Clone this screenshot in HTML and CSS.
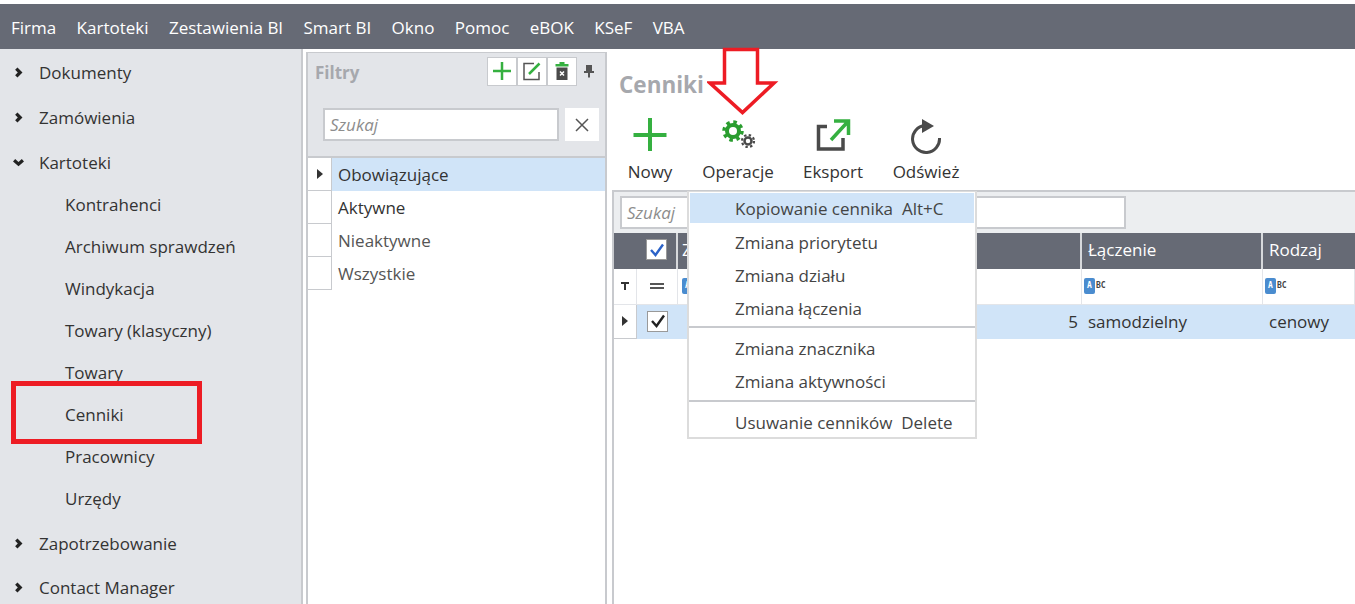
FILE: index.html
```html
<!DOCTYPE html>
<html lang="pl">
<head>
<meta charset="utf-8">
<title>Cenniki</title>
<link rel="stylesheet" href="styles.css">
</head>
<body>
<div class="app">
  <nav class="menubar">
    <span>Firma</span><span>Kartoteki</span><span>Zestawienia BI</span><span>Smart BI</span><span>Okno</span><span>Pomoc</span><span>eBOK</span><span>KSeF</span><span>VBA</span>
  </nav>
  <div class="workspace">
    <aside class="sidebar">
      <div class="group"><svg class="chev" viewBox="0 0 10 10"><path d="M3 1.500 6.500 5 3 8.500"/></svg>Dokumenty</div>
      <div class="group"><svg class="chev" viewBox="0 0 10 10"><path d="M3 1.500 6.500 5 3 8.500"/></svg>Zamówienia</div>
      <div class="group"><svg class="chev" viewBox="0 0 10 10"><path d="M1 3 5 6.500 9 3"/></svg>Kartoteki</div>
      <div class="child">Kontrahenci</div>
      <div class="child">Archiwum sprawdzeń</div>
      <div class="child">Windykacja</div>
      <div class="child">Towary (klasyczny)</div>
      <div class="child">Towary</div>
      <div class="child">Cenniki</div>
      <div class="child">Pracownicy</div>
      <div class="child">Urzędy</div>
      <div class="group"><svg class="chev" viewBox="0 0 10 10"><path d="M3 1.500 6.500 5 3 8.500"/></svg>Zapotrzebowanie</div>
      <div class="group"><svg class="chev" viewBox="0 0 10 10"><path d="M3 1.500 6.500 5 3 8.500"/></svg>Contact Manager</div>
    </aside>
    <section class="filters">
      <header class="filters-head">
        <span class="filters-title">Filtry</span>
        <div class="tool-group">
          <button class="tool"><svg viewBox="0 0 22 22" width="22" height="22"><path d="M11 2V20M2 11H20" class="g2"/></svg></button>
          <button class="tool"><svg viewBox="0 0 22 22" width="22" height="22"><path d="M18 12V19.500H3V3.500H13" class="d15"/><path d="M8 14 18.500 3.500" class="g25"/></svg></button>
          <button class="tool"><svg viewBox="0 0 22 22" width="22" height="22"><path d="M4.500 4H17.500V6.500H4.500ZM8.500 4V2H13.500V4" class="gfill"/><path d="M5.500 7.500H16.500V20H5.500Z" class="dfill"/><path d="M9 11.500 13 15.500M13 11.500 9 15.500" class="wline"/></svg></button>
        </div>
        <svg class="pin" viewBox="0 0 12 14" width="12" height="14"><path d="M3 1H9V7H11V9H7V13.500H5V9H1V7H3Z"/></svg>
      </header>
      <div class="filters-search">
        <div class="input filter-input">Szukaj</div>
        <div class="clear"><svg viewBox="0 0 14 14" width="14" height="14"><path d="M1 1 13 13M13 1 1 13"/></svg></div>
      </div>
      <div class="filter-row selected"><div class="indicator"><i class="tri"></i></div><div class="filter-name">Obowiązujące</div></div>
      <div class="filter-row"><div class="indicator"></div><div class="filter-name">Aktywne</div></div>
      <div class="filter-row"><div class="indicator"></div><div class="filter-name muted">Nieaktywne</div></div>
      <div class="filter-row"><div class="indicator"></div><div class="filter-name muted">Wszystkie</div></div>
    </section>
    <main class="main">
      <h1 class="title">Cenniki</h1>
      <div class="ribbon">
        <div class="action a-new"><svg viewBox="0 0 36 36" width="36" height="36"><path d="M18 0V33M1.500 17H34.500" class="g3"/></svg><span>Nowy</span></div>
        <div class="action a-ops"><svg viewBox="0 0 36 36" width="36" height="36"><circle cx="13" cy="13" r="6" fill="none" stroke="#2a9d2f" stroke-width="4"/><circle cx="13" cy="13" r="9" fill="none" stroke="#2a9d2f" stroke-width="3.500" stroke-dasharray="3.500 3.570"/><circle cx="28" cy="23" r="3.500" fill="none" stroke="#4a4a4a" stroke-width="2.500"/><circle cx="28" cy="23" r="6" fill="none" stroke="#4a4a4a" stroke-width="2.200" stroke-dasharray="2.400 2.310"/></svg><span>Operacje</span></div>
        <div class="action a-exp"><svg viewBox="0 0 36 36" width="36" height="36"><path d="M12 8.500H3.500V31H28V20" fill="none" stroke="#4a4a4a" stroke-width="3.500"/><path d="M16 22 33 3.500M19 3H33.500V17" fill="none" stroke="#35b040" stroke-width="3.500"/></svg><span>Eksport</span></div>
        <div class="action a-ref"><svg viewBox="0 0 36 36" width="36" height="36"><path d="M17 7.500A13.500 13.500 0 1 0 31.500 20" fill="none" stroke="#4a4a4a" stroke-width="3"/><path d="M14 1 26 8 14 15Z" fill="#4a4a4a"/></svg><span>Odśwież</span></div>
      </div>
      <div class="grid-panel">
        <div class="grid-tools"><div class="input grid-input">Szukaj</div></div>
        <div class="grid-row head">
          <div class="c c-ind"></div>
          <div class="c c-chk"><span class="cb blue"><svg viewBox="0 0 18 18" width="18" height="18"><path d="M3 9 7.500 14 15 3.500"/></svg></span></div>
          <div class="c c-main">Z</div>
          <div class="c c-link">Łączenie</div>
          <div class="c c-type">Rodzaj</div>
        </div>
        <div class="grid-row filter">
          <div class="c c-ind"><svg viewBox="0 0 10 10" width="10" height="10"><path d="M1 1H9V3H6V9H4V3H1Z" fill="#333"/></svg></div>
          <div class="c c-chk"><span class="eq"></span></div>
          <div class="c c-main"><span class="abc"><b>A</b>BC</span></div>
          <div class="c c-link"><span class="abc"><b>A</b>BC</span></div>
          <div class="c c-type"><span class="abc"><b>A</b>BC</span></div>
        </div>
        <div class="grid-row data">
          <div class="c c-ind"><i class="tri"></i></div>
          <div class="c c-chk"><span class="cb"><svg viewBox="0 0 18 18" width="18" height="18"><path d="M3 9 7.500 14 15 3.500"/></svg></span></div>
          <div class="c c-main num">5</div>
          <div class="c c-link">samodzielny</div>
          <div class="c c-type">cenowy</div>
        </div>
      </div>
    </main>
  </div>

  <div class="menu">
    <div class="menu-item hot">Kopiowanie cennika&nbsp; Alt+C</div>
    <div class="menu-item">Zmiana priorytetu</div>
    <div class="menu-item">Zmiana działu</div>
    <div class="menu-item">Zmiana łączenia</div>
    <div class="menu-sep"></div>
    <div class="menu-item">Zmiana znacznika</div>
    <div class="menu-item">Zmiana aktywności</div>
    <div class="menu-sep second"></div>
    <div class="menu-item last">Usuwanie cenników&nbsp; Delete</div>
  </div>

  <svg class="arrow" viewBox="0 0 72 68" width="72" height="68"><path d="M17.500 2.500H50.500V36H67L35.500 65.500 3 36H17.500Z" fill="#fff" stroke="#ed1c24" stroke-width="3.500"/></svg>
  <div class="callout"></div>
</div>
</body>
</html>
```

FILE: styles.css
```css
* { box-sizing: border-box; }
html, body { margin: 0; height: 100%; overflow: hidden; }
body { background: #fff; font-family: "Open Sans", "Noto Sans", sans-serif; font-size: 17px; color: #333; }
.app { position: relative; width: 1355px; height: 604px; padding-top: 4px; overflow: hidden; display: flex; flex-direction: column; }

.menubar { height: 45px; background: #666a75; color: #fff; display: flex; align-items: center; gap: 20.400px; padding: 2px 0 0 11px; flex: none; }

.workspace { flex: 1; display: flex; min-height: 0; }

.sidebar { width: 303px; flex: none; background: #e3e5e9; border-right: 2px solid #c8cace; padding-top: 1px; }
.group { height: 45px; display: flex; align-items: center; padding-left: 13px; gap: 15px; }
.group + .child { margin-top: -2px; }
.child + .group { margin-top: 2px; }
.group:last-child { margin-top: -1px; }
.child { height: 42px; display: flex; align-items: center; padding-left: 65px; }
.chev { width: 11px; height: 11px; fill: none; stroke: #222; stroke-width: 3; flex: none; }

.filters { width: 301px; flex: none; margin: 3px 0 0 3px; border: 2px solid #c8cace; border-bottom: 0; border-top-width: 1px; }
.filters-head { height: 36px; background: #e3e5e9; display: flex; align-items: center; padding: 2px 10px 0 7px; }
.filters-title { font-weight: 700; color: #a6a8ad; font-size: 17px; flex: 1; }
.tool-group { display: flex; background: #c8cace; padding: 1px; gap: 2px; margin-top: -2px; }
.tool { width: 28px; height: 27px; padding: 0; background: #fff; border: 0; display: flex; align-items: center; justify-content: center; }
.pin { margin-left: 6px; margin-top: -3px; fill: #555; }
.g2 { stroke: #35b040; stroke-width: 2.500; fill: none; }
.d15 { stroke: #555; stroke-width: 1.500; fill: none; }
.g25 { stroke: #35b040; stroke-width: 2.500; fill: none; }
.gfill { fill: #35b040; }
.dfill { fill: #4a4a4a; }
.wline { stroke: #fff; stroke-width: 1.500; fill: none; }

.filters-search { height: 69px; background: #e3e5e9; border-bottom: 2px solid #c8cace; display: flex; align-items: flex-start; padding: 19px 6px 0 15px; gap: 6px; }
.input { background: #fff; border: 2px solid #c8cace; color: #8d8d8d; font-style: italic; display: flex; align-items: center; padding-left: 5px; }
.filter-input { width: 237px; height: 33px; }
.clear { width: 34px; height: 33px; background: #fff; display: flex; align-items: center; justify-content: center; }
.clear path { stroke: #555; stroke-width: 1.500; fill: none; }

.filter-row { height: 33px; display: flex; }
.indicator { width: 24px; height: 33px; border-right: 1px solid #c8cace; border-bottom: 1px solid #c8cace; display: flex; align-items: center; justify-content: center; flex: none; }
.filter-name { flex: 1; display: flex; align-items: center; padding-left: 6px; }
.selected .filter-name { background: #d0e4f8; }
.muted { color: #555; }
.tri { display: block; width: 0; height: 0; border-left: 6px solid #333; border-top: 5px solid transparent; border-bottom: 5px solid transparent; }

.main { flex: 1; min-width: 0; margin-left: 5px; display: flex; flex-direction: column; }
.title { margin: 0; height: 69px; padding: 22px 0 0 7px; font-size: 22.500px; line-height: 28px; font-weight: 700; color: #a6a8ad; flex: none; }
.ribbon { height: 72px; display: flex; flex: none; }
.action { display: flex; flex-direction: column; align-items: center; }
.action svg { flex: none; }
.action span { margin-top: 8px; line-height: 20px; white-space: nowrap; }
.a-new { width: 76px; }
.a-ops { width: 100px; }
.a-exp { width: 90px; }
.a-ref { width: 96px; }

.grid-panel { flex: 1; border-top: 2px solid #c8cace; border-left: 2px solid #c8cace; min-height: 0; }
.grid-tools { height: 41px; background: #eceef0; display: flex; align-items: center; padding-left: 6px; }
.grid-input { width: 506px; height: 33px; }
.grid-row { display: flex; }
.c { display: flex; align-items: center; flex: none; }
.c-ind { width: 23px; justify-content: center; }
.c-chk { width: 41px; justify-content: center; }
.c-main { width: 404px; padding-left: 4px; }
.c-link { width: 181px; padding-left: 6px; }
.c-type { width: 92px; padding-left: 6px; }

.head { height: 36px; background: #666a75; color: #fff; }
.head .c { height: 36px; border-right: 2px solid #d7d9dc; padding-bottom: 3px; }
.head .c-ind { border-right: 0; }
.head .c-type { border-right: 0; }
.filter { height: 36px; border-bottom: 1px solid #e3e5e9; }
.filter .c { height: 35px; border-right: 1px solid #e3e5e9; padding-bottom: 2px; }
.filter .c-link, .filter .c-type { padding-left: 2px; }
.data { height: 34px; background: #d0e4f8; }
.data .c { padding-bottom: 2px; }
.data .c-ind { background: #fff; border-right: 1px solid #c8cace; border-bottom: 1px solid #c8cace; }
.num { justify-content: flex-end; padding-right: 4px; }
.cb { width: 21px; height: 21px; background: #fff; border: 1px solid #999; display: flex; align-items: center; justify-content: center; }
.cb path { fill: none; stroke: #222; stroke-width: 2.400; }
.cb.blue path { stroke: #2b62c8; }
.eq { width: 14px; height: 6px; border-top: 2px solid #555; border-bottom: 2px solid #555; }
.abc { display: inline-flex; align-items: center; font-size: 8px; line-height: 12px; color: #444; font-family: "DejaVu Sans Mono", monospace; font-weight: 700; }
.abc b { width: 11px; height: 16px; background: #4a8ccf; color: #fff; border-radius: 2px; display: flex; align-items: center; justify-content: center; margin-right: 1px; font-size: 8px; }

.menu { position: absolute; left: 687px; top: 191px; width: 290px; background: #fff; border: 2px solid #dcdcdc; border-top-width: 1px; padding-top: 1px; }
.menu-item { height: 33px; padding-left: 46px; display: flex; align-items: center; color: #444; }
.menu-item.hot { background: #d0e4f8; margin: 0 1px 3px; padding-left: 45px; height: 30px; }
.menu-item.last { height: 29px; }
.menu-sep { height: 2px; background: #c8cace; margin: 1px 0 4px; }
.menu-sep.second { margin: 2px 0 6px; }
.arrow { position: absolute; left: 707px; top: 47px; }
.callout { position: absolute; left: 11px; top: 381px; width: 191px; height: 63px; border: 5px solid #ed1c24; }
.g3 { stroke: #35b040; stroke-width: 4; fill: none; }
```
